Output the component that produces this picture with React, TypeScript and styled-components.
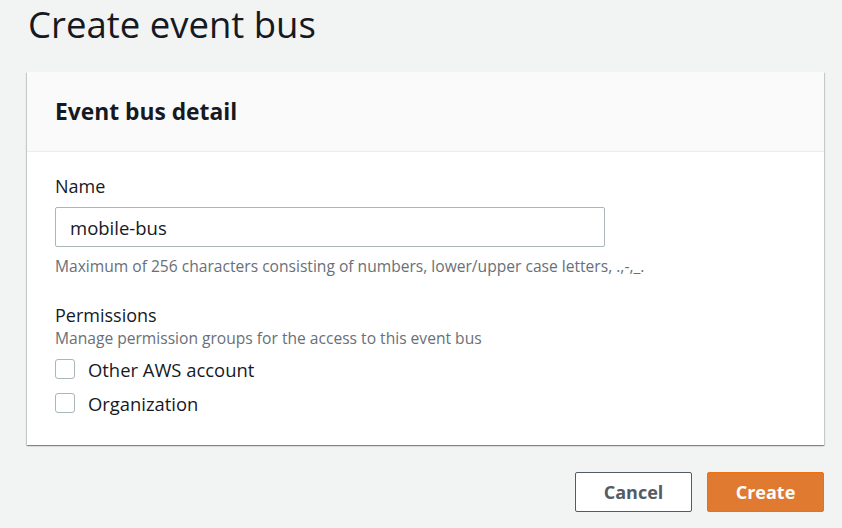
import React from "react";
import styled, { createGlobalStyle } from "styled-components";

const GlobalStyle = createGlobalStyle`
  html, body {
    margin: 0;
    padding: 0;
    background: #f2f3f3;
    font-family: "Open Sans", "Noto Sans", sans-serif;
    color: #16191f;
  }
`;

const Page = styled.div`
  width: 842px;
  height: 528px;
  overflow: hidden;
  box-sizing: border-box;
  padding: 0 18px 0 27px;
`;

const PageTitle = styled.h1`
  margin: 0;
  padding: 2px 0 0 1px;
  height: 70px;
  font-size: 36.5px;
  font-weight: 400;
  line-height: 44px;
`;

const Card = styled.section`
  background: #fff;
  box-shadow: 0 1px 1px 0 rgba(0, 28, 36, 0.3), 1px 1px 1px 0 rgba(0, 28, 36, 0.15),
    -1px 1px 1px 0 rgba(0, 28, 36, 0.15);
`;

const CardHeader = styled.header`
  height: 80px;
  box-sizing: border-box;
  padding: 0 28px;
  display: flex;
  align-items: center;
  background: #fafafa;
  border-bottom: 1px solid #eaeded;
`;

const CardTitle = styled.h2`
  margin: 0;
  font-size: 22.8px;
  font-weight: 700;
`;

const CardBody = styled.div`
  padding: 22px 28px 25px;
  display: flex;
  flex-direction: column;
`;

const Label = styled.div`
  font-size: 18px;
  line-height: 24px;
`;

const TextInput = styled.input`
  margin-top: 9px;
  width: 550px;
  height: 40px;
  box-sizing: border-box;
  border: 1px solid #aab7b8;
  border-radius: 2px;
  padding: 0 14px;
  font-family: inherit;
  font-size: 18.5px;
  color: #16191f;
  background: #fff;
  outline: none;
`;

const Hint = styled.div<{ $gap?: number }>`
  margin-top: ${(p) => p.$gap ?? 0}px;
  font-size: 15.6px;
  line-height: 22px;
  color: #687078;
`;

const Group = styled.div`
  margin-top: 26px;
  display: flex;
  flex-direction: column;
`;

const Checks = styled.div`
  margin-top: 3px;
  display: flex;
  flex-direction: column;
`;

const CheckRow = styled.label`
  display: flex;
  align-items: center;
  gap: 13px;
  height: 34px;
  font-size: 18.4px;
`;

const Box = styled.span`
  width: 20px;
  height: 20px;
  box-sizing: border-box;
  border: 1px solid #aab7b8;
  border-radius: 3px;
  background: #fff;
`;

const Actions = styled.div`
  display: flex;
  justify-content: flex-end;
  gap: 15px;
  margin-top: 27px;
`;

const Button = styled.button<{ $primary?: boolean }>`
  width: 117px;
  height: 40px;
  box-sizing: border-box;
  border-radius: 2px;
  font-family: inherit;
  font-size: 18px;
  font-weight: 700;
  border: 1px solid ${(p) => (p.$primary ? "#ec7211" : "#545b64")};
  background: ${(p) => (p.$primary ? "#e07a30" : "#fff")};
  color: ${(p) => (p.$primary ? "#fff" : "#545b64")};
  cursor: pointer;
`;

export default function App() {
  return (
    <>
      <GlobalStyle />
      <Page>
        <PageTitle>Create event bus</PageTitle>
        <Card>
          <CardHeader>
            <CardTitle>Event bus detail</CardTitle>
          </CardHeader>
          <CardBody>
            <Label>Name</Label>
            <TextInput defaultValue="mobile-bus" />
            <Hint $gap={8}>
              Maximum of 256 characters consisting of numbers, lower/upper case letters, .,-,_.
            </Hint>
            <Group>
              <Label>Permissions</Label>
              <Hint>Manage permission groups for the access to this event bus</Hint>
              <Checks>
                <CheckRow>
                  <Box />
                  Other AWS account
                </CheckRow>
                <CheckRow>
                  <Box />
                  Organization
                </CheckRow>
              </Checks>
            </Group>
          </CardBody>
        </Card>
        <Actions>
          <Button>Cancel</Button>
          <Button $primary>Create</Button>
        </Actions>
      </Page>
    </>
  );
}
